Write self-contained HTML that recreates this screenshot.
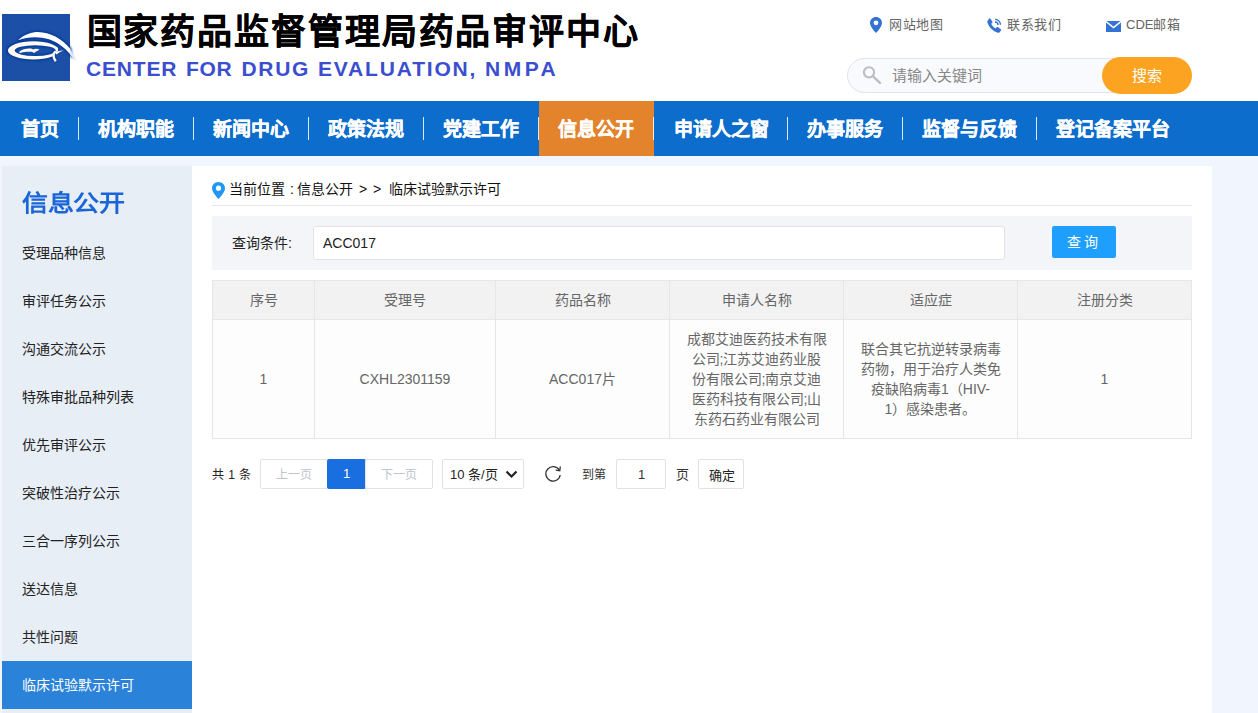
<!DOCTYPE html>
<html lang="zh-CN">
<head>
<meta charset="utf-8">
<title>国家药品监督管理局药品审评中心</title>
<style>
*{margin:0;padding:0;box-sizing:border-box;}
html,body{width:1258px;height:713px;overflow:hidden;background:#f1f6fe;font-family:"Liberation Sans",sans-serif;}
.abs{position:absolute;}
#header{position:absolute;left:0;top:0;width:1258px;height:101px;background:#fff;}
#logo{position:absolute;left:2px;top:14px;width:68px;height:67px;}
#cn{position:absolute;left:86.5px;top:7px;font-size:35px;font-weight:700;-webkit-text-stroke:0.3px #000;color:#000;white-space:nowrap;line-height:50px;letter-spacing:1.9px;}
.en{position:absolute;top:57px;font-size:21px;font-weight:bold;color:#3a4ecf;white-space:nowrap;line-height:24px;}
.tl{position:absolute;top:16px;font-size:13px;letter-spacing:0.6px;color:#666;line-height:18px;white-space:nowrap;}
#search{position:absolute;left:847px;top:58px;width:344px;height:35px;border:1px solid #e1e4ea;border-radius:18px;background:#f8fafd;}
#ph{position:absolute;left:892px;top:66px;font-size:15px;color:#888;line-height:20px;white-space:nowrap;}
#sbtn{position:absolute;left:1102px;top:57px;width:90px;height:37px;border-radius:19px;background:#fca421;color:#fff;font-size:15px;text-align:center;line-height:37px;}
#nav{position:absolute;left:0;top:101px;width:1258px;height:55px;background:#0d6dcc;}
.ni{position:absolute;top:1px;height:55px;line-height:55px;font-size:19px;font-weight:bold;color:#fff;white-space:nowrap;-webkit-text-stroke:0.3px #fff;}
.sep{position:absolute;top:16px;width:1px;height:23px;background:#fff;opacity:.85;}
#active{position:absolute;left:539px;top:0;width:115px;height:55px;background:#e3832c;}
#side{position:absolute;left:2px;top:166px;width:190px;height:547px;background:#e8eef6;}
#stitle{position:absolute;left:22px;top:184px;font-size:26px;font-weight:bold;color:#1a66d6;line-height:36px;white-space:nowrap;transform:scaleY(0.88);transform-origin:0 30px;letter-spacing:-0.3px;}
.si{position:absolute;left:22px;font-size:14px;color:#222;line-height:20px;white-space:nowrap;}
#sact{position:absolute;left:2px;top:661px;width:190px;height:48px;background:#2b82d9;}
#main{position:absolute;left:192px;top:166px;width:1020px;height:547px;background:#fff;}
#pin2{position:absolute;left:212px;top:182px;}
#bc,.bct{position:absolute;left:229px;top:179px;font-size:14px;color:#111;line-height:20px;white-space:nowrap;}
#bline{position:absolute;left:212px;top:205px;width:980px;height:1px;background:#e6e6e6;}
#qbox{position:absolute;left:212px;top:216px;width:980px;height:54px;background:#f3f5f9;}
#qlabel{position:absolute;left:232px;top:233px;font-size:14px;color:#222;line-height:20px;white-space:nowrap;}
#qinput{position:absolute;left:313px;top:226px;width:692px;height:34px;background:#fff;border:1px solid #e3e3e3;border-radius:3px;}
#qval{position:absolute;left:323px;top:233px;font-size:14px;color:#222;line-height:20px;}
#qbtn{position:absolute;left:1052px;top:226px;width:64px;height:32px;background:#1e9ffe;border-radius:2px;color:#fff;font-size:14px;line-height:32px;text-align:center;letter-spacing:3px;}
table{position:absolute;left:212px;top:280px;width:980px;border-collapse:collapse;table-layout:fixed;}
td,th{border:1px solid #e6e6e6;text-align:center;font-size:14px;color:#666;font-weight:normal;line-height:20px;}
th{background:#f2f2f2;height:39px;}
td{background:#fdfdfd;height:119px;padding:0 16px;}
.pg{position:absolute;font-size:13px;line-height:18px;white-space:nowrap;}
.pbox{position:absolute;top:459px;height:30px;border:1px solid #e2e2e2;background:#fff;border-radius:2px;}
</style>
</head>
<body>
<div id="header">
  <svg id="logo" viewBox="0 0 68 67" width="68" height="67" style="overflow:visible">
    <defs><filter id="bl" x="-20%" y="-30%" width="140%" height="160%"><feGaussianBlur stdDeviation="1.1"/></filter>
    <clipPath id="rc"><path d="M0 0 H56 V36.8 L51.2 40.5 V67 H0 Z"/></clipPath></defs>
    <rect x="0" y="0" width="68" height="67" fill="#1b50a6"/>
    <g filter="url(#bl)" fill="#06389a" stroke="#06389a" stroke-width="2.4">
      <path d="M15.9 26.3 C22 20.5 30 18 36 18 C48 18.3 60 24.5 68 34.5 L69 41 C62 33 55 28 47 25.2 C38 22.5 26 22.2 15.9 26.3 Z"/>
      <path fill-rule="evenodd" clip-path="url(#rc)" d="M5.9 36.4 A25.5 9.1 0 1 0 56.9 36.4 A25.5 9.1 0 1 0 5.9 36.4 Z M12.7 36.6 A20.5 5.4 0 1 0 53.7 36.6 A20.5 5.4 0 1 0 12.7 36.6 Z"/>
      <path d="M52.8 37.6 Q49.3 42 53.6 47" fill="none"/>
    </g>
    <path fill="#fff" d="M15.9 26.3 C22 20.5 30 18 36 18 C48 18.3 60 24.5 68 34.5 L69 41 C62 33 55 28 47 25.2 C38 22.5 26 22.2 15.9 26.3 Z"/>
    <path fill="#fdfbf2" fill-rule="evenodd" clip-path="url(#rc)" d="M5.9 36.4 A25.5 9.1 0 1 0 56.9 36.4 A25.5 9.1 0 1 0 5.9 36.4 Z M12.7 36.6 A20.5 5.4 0 1 0 53.7 36.6 A20.5 5.4 0 1 0 12.7 36.6 Z"/>
    <path d="M53.2 37.4 Q49.6 42 53.8 47.2" stroke="#fdfbf2" stroke-width="2.3" fill="none"/>
    <path d="M52.8 38.3 Q57 36.2 61.5 36.4 Q57 37.8 54.5 40.5 Z" fill="#fdfbf2"/>
    <path fill="#fdfbf2" d="M17.4 37.8 C20 35.2 25 34.2 29 34.6 L31.3 35.6 C32.8 34.6 35 34.2 37.6 35.8 C35.5 36.8 33.5 37.5 32.2 39 L30.5 37.9 C26 37.6 21 38 17.4 39.2 Z"/>
    <path fill="#dfe7f6" d="M68 34.8 L74.5 46 L73.5 46.5 L68 40.5 Z"/>
  </svg>
  <div id="cn">国家药品监督管理局药品审评中心</div>
  <div class="en" style="left:86px;letter-spacing:0.84px">CENTER</div><div class="en" style="left:186px;letter-spacing:0.71px">FOR</div><div class="en" style="left:241.5px;letter-spacing:1.66px">DRUG</div><div class="en" style="left:318px;letter-spacing:1.82px">EVALUATION,</div><div class="en" style="left:485px;letter-spacing:3.5px">NMPA</div>

  <svg class="abs" style="left:870px;top:17px" width="12" height="16" viewBox="0 0 12 16"><path d="M6 0C2.7 0 0 2.6 0 5.9 0 10 6 16 6 16s6-6 6-10.1C12 2.6 9.3 0 6 0zm0 8.2a2.4 2.4 0 1 1 0-4.8 2.4 2.4 0 0 1 0 4.8z" fill="#3573d3"/></svg>
  <div class="tl" style="left:889px">网站地图</div>
  <svg class="abs" style="left:987px;top:18px" width="15" height="15" viewBox="0 0 15 15"><path d="M3.2 0.6 L5.4 3.6 C5.7 4 5.6 4.6 5.2 4.9 L4.2 5.7 C4.9 7.5 6.5 9.3 8.6 10.4 L9.5 9.3 C9.8 8.9 10.4 8.8 10.8 9.1 L13.8 11.2 C14.2 11.5 14.3 12.1 14 12.5 L12.6 14.2 C12.2 14.7 11.5 14.9 10.9 14.7 C5.9 13.1 1.9 9.3 0.3 4.2 C0.1 3.6 0.3 2.9 0.8 2.5 L2.2 0.5 C2.5 0.2 2.9 0.2 3.2 0.6Z" fill="#3573d3"/><path d="M8.2 1.5 A5.5 5.5 0 0 1 13.5 6.8" stroke="#3573d3" stroke-width="1.4" fill="none"/><path d="M8 4 A3 3 0 0 1 11 7" stroke="#3573d3" stroke-width="1.4" fill="none"/></svg>
  <div class="tl" style="left:1007px">联系我们</div>
  <svg class="abs" style="left:1106px;top:21px" width="15" height="11" viewBox="0 0 15 11"><rect x="0" y="0" width="15" height="11" fill="#3573d3"/><path d="M0 0.5 L7.5 6.5 L15 0.5" stroke="#fff" stroke-width="1.5" fill="none"/></svg>
  <div class="tl" style="left:1126px"><span style="font-size:13px;letter-spacing:0">CDE</span>邮箱</div>

  <div id="search"></div>
  <svg class="abs" style="left:862px;top:66px" width="20" height="19" viewBox="0 0 20 19"><circle cx="7" cy="6.3" r="5.1" stroke="#bdbdbd" stroke-width="2.1" fill="none"/><path d="M11.2 10.6 L18.8 17.6" stroke="#bdbdbd" stroke-width="2.3"/></svg>
  <div id="ph">请输入关键词</div>
  <div id="sbtn">搜索</div>
</div>

<div id="nav">
  <div id="active"></div>
  <div class="ni" style="left:21px">首页</div>
  <div class="sep" style="left:78px"></div>
  <div class="ni" style="left:98px">机构职能</div>
  <div class="sep" style="left:193px"></div>
  <div class="ni" style="left:213px">新闻中心</div>
  <div class="sep" style="left:308px"></div>
  <div class="ni" style="left:328px">政策法规</div>
  <div class="sep" style="left:423px"></div>
  <div class="ni" style="left:443px">党建工作</div>
  <div class="sep" style="left:538px"></div>
  <div class="ni" style="left:558px">信息公开</div>
  <div class="sep" style="left:653px"></div>
  <div class="ni" style="left:674px">申请人之窗</div>
  <div class="sep" style="left:787px"></div>
  <div class="ni" style="left:807px">办事服务</div>
  <div class="sep" style="left:902px"></div>
  <div class="ni" style="left:922px">监督与反馈</div>
  <div class="sep" style="left:1036px"></div>
  <div class="ni" style="left:1056px">登记备案平台</div>
</div>

<div id="side"></div>
<div id="stitle">信息公开</div>
<div class="si" style="top:243px">受理品种信息</div>
<div class="si" style="top:291px">审评任务公示</div>
<div class="si" style="top:339px">沟通交流公示</div>
<div class="si" style="top:387px">特殊审批品种列表</div>
<div class="si" style="top:435px">优先审评公示</div>
<div class="si" style="top:483px">突破性治疗公示</div>
<div class="si" style="top:531px">三合一序列公示</div>
<div class="si" style="top:579px">送达信息</div>
<div class="si" style="top:627px">共性问题</div>
<div id="sact"></div>
<div class="si" style="top:675px;color:#fff">临床试验默示许可</div>

<div id="main"></div>
<svg id="pin2" width="13" height="17" viewBox="0 0 13 17"><path d="M6.5 0C2.9 0 0 2.8 0 6.3 0 10.6 6.5 17 6.5 17S13 10.6 13 6.3C13 2.8 10.1 0 6.5 0zm0 8.8a2.6 2.6 0 1 1 0-5.2 2.6 2.6 0 0 1 0 5.2z" fill="#2196f3"/></svg>
<div id="bc">当前位置</div><div class="bct" style="left:290px">:</div><div class="bct" style="left:297px">信息公开</div><div class="bct" style="left:359px">&gt;</div><div class="bct" style="left:373px">&gt;</div><div class="bct" style="left:389px">临床试验默示许可</div>
<div id="bline"></div>

<div id="qbox"></div>
<div id="qlabel">查询条件:</div>
<div id="qinput"></div>
<div id="qval">ACC017</div>
<div id="qbtn">查询</div>

<table>
  <colgroup><col style="width:102px"><col style="width:181px"><col style="width:174px"><col style="width:174px"><col style="width:174px"><col style="width:174px"></colgroup>
  <tr><th>序号</th><th>受理号</th><th>药品名称</th><th>申请人名称</th><th>适应症</th><th>注册分类</th></tr>
  <tr><td>1</td><td>CXHL2301159</td><td>ACC017片</td><td style="white-space:nowrap">成都艾迪医药技术有限<br>公司;江苏艾迪药业股<br>份有限公司;南京艾迪<br>医药科技有限公司;山<br>东药石药业有限公司</td><td style="white-space:nowrap">联合其它抗逆转录病毒<br>药物，用于治疗人类免<br>疫缺陷病毒1（HIV-<br>1）感染患者。</td><td>1</td></tr>
</table>

<div class="pg" style="left:212px;top:466px;color:#222;font-size:12px;letter-spacing:0.5px">共 1 条</div>
<div class="pbox" style="left:260px;width:68px"></div>
<div class="pg" style="left:276px;top:466px;color:#c0c4cc;font-size:12px">上一页</div>
<div class="abs" style="left:327px;top:459px;width:39px;height:30px;background:#1a6fe0;border-radius:2px;color:#fff;font-size:13px;line-height:30px;text-align:center">1</div>
<div class="pbox" style="left:365px;width:68px"></div>
<div class="pg" style="left:381px;top:466px;color:#c0c4cc;font-size:12px">下一页</div>
<div class="pbox" style="left:442px;width:82px"></div>
<div class="pg" style="left:450px;top:466px;color:#222">10 条/页</div>
<svg class="abs" style="left:505px;top:470px" width="13" height="9" viewBox="0 0 13 9"><path d="M1.5 1.5 L6.5 6.5 L11.5 1.5" stroke="#222" stroke-width="2.2" fill="none"/></svg>
<svg class="abs" style="left:544px;top:465px" width="18" height="17" viewBox="0 0 18 17"><path d="M15.3 5.2 A7.2 7.2 0 1 0 16.2 10" stroke="#333" stroke-width="1.3" fill="none"/><path d="M16.3 1.5 L15.8 5.8 L11.8 5.2" stroke="#333" stroke-width="1.3" fill="none"/></svg>
<div class="pg" style="left:582px;top:466px;color:#333;font-size:12px">到第</div>
<div class="pbox" style="left:616px;width:50px"></div>
<div class="pg" style="left:638px;top:466px;color:#333">1</div>
<div class="pg" style="left:676px;top:466px;color:#333">页</div>
<div class="pbox" style="left:698px;width:46px"></div>
<div class="pg" style="left:709px;top:467px;color:#222">确定</div>
</body>
</html>
